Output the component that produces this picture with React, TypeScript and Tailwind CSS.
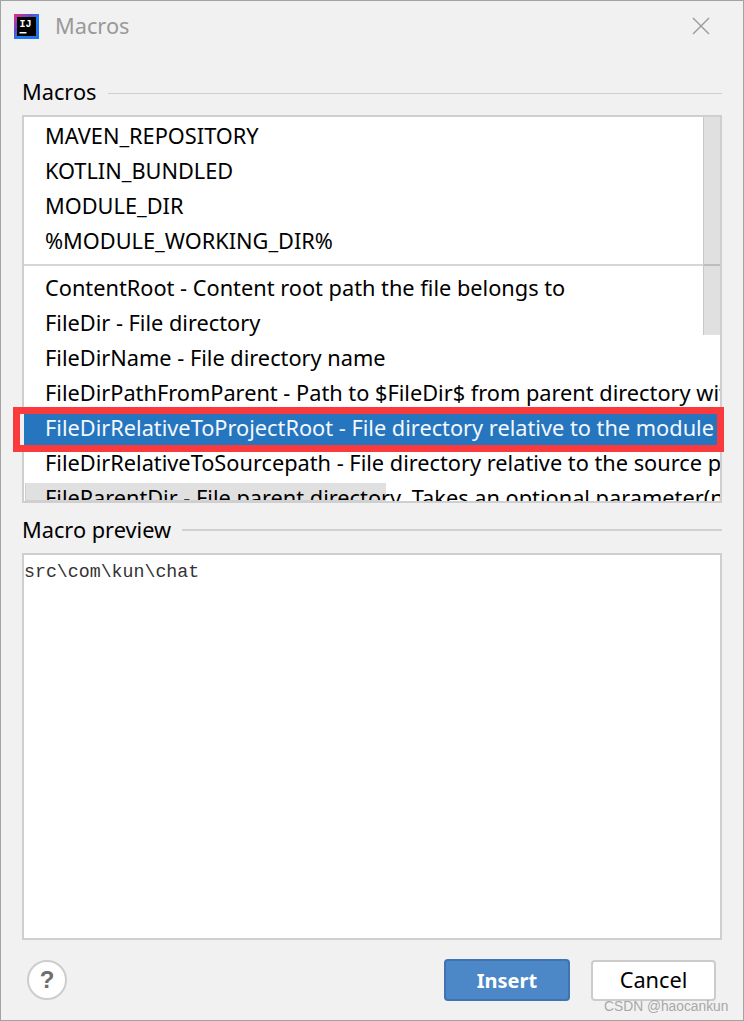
const rowsA = ["MAVEN_REPOSITORY", "KOTLIN_BUNDLED", "MODULE_DIR", "%MODULE_WORKING_DIR%"];
const rowsB = [
  "ContentRoot - Content root path the file belongs to",
  "FileDir - File directory",
  "FileDirName - File directory name",
  "FileDirPathFromParent - Path to $FileDir$ from parent directory with an optional parameter",
  "FileDirRelativeToProjectRoot - File directory relative to the module content root",
  "FileDirRelativeToSourcepath - File directory relative to the source path root",
  "FileParentDir - File parent directory. Takes an optional parameter(number of levels up)",
];

function Row({ text, selected }: { text: string; selected?: boolean }) {
  return (
    <div className={selected ? "h-[35px] pl-[21px] pb-[1px] flex items-center whitespace-nowrap bg-[#2675bf] text-[#f4f8fc]" : "h-[35px] pl-[21px] pb-[1px] flex items-center whitespace-nowrap text-black"}>
      {text}
    </div>
  );
}

function Label({ text, thick }: { text: string; thick?: boolean }) {
  return (
    <div className="h-[24px] flex items-center gap-[11px] text-black">
      <span className={thick ? "leading-none pb-[1px]" : "leading-none pb-[3px]"}>{text}</span>
      <div className={thick ? "flex-1 h-[2px] bg-[#d0d0d0]" : "flex-1 h-[1px] bg-[#cfcfcf]"} />
    </div>
  );
}

export default function App() {
  return (
    <div className="relative w-[744px] h-[1021px] flex flex-col border border-[#a3a3a3] bg-[#f1f1f1] overflow-hidden font-['Noto_Sans',sans-serif] text-[21.75px]">
      <div className="h-[50px] shrink-0 flex items-center pl-[13px] pr-[33px]">
        <svg width="25" height="25" viewBox="0 0 25 25" className="shrink-0">
          <defs>
            <linearGradient id="ij" x1="0" y1="0" x2="1" y2="1">
              <stop offset="0" stopColor="#ea2f7e" />
              <stop offset="0.35" stopColor="#6a45c9" />
              <stop offset="0.55" stopColor="#1f7cf0" />
              <stop offset="1" stopColor="#1f6ff0" />
            </linearGradient>
          </defs>
          <rect width="25" height="25" fill="url(#ij)" />
          <rect x="3" y="3" width="19" height="19" fill="#000" />
          <text x="5.5" y="13" fill="#fff" fontSize="10" fontWeight="700" fontFamily="Liberation Mono, monospace">IJ</text>
          <rect x="5.5" y="18" width="7" height="1.5" fill="#fff" />
        </svg>
        <span className="ml-[16px] text-[#999999]">Macros</span>
        <svg width="18" height="18" viewBox="0 0 18 18" className="ml-auto" fill="none" stroke="#9a9a9a" strokeWidth="1.4">
          <path d="M1 1 L17 17 M17 1 L1 17" />
        </svg>
      </div>

      <div className="flex-1 min-h-0 flex flex-col px-[21px]">
        <div className="mt-[30px]"><Label text="Macros" /></div>
        <div className="relative mt-[10px] h-[388px] shrink-0 border-2 border-[#cfcfcf] bg-white">
          <div className="h-full overflow-hidden pt-[2px]">
            {rowsA.map((t) => <Row key={t} text={t} />)}
            <div className="mt-[5px] mb-[5px] h-[2px] bg-[#d6d6d6]" />
            {rowsB.map((t, i) => <Row key={t} text={t} selected={i === 4} />)}
          </div>
          <div className="absolute right-0 top-0 w-[17px] h-[218px] bg-black/12 border-l border-[#c8c8c8]" />
          <div className="absolute left-[1px] bottom-0 w-[361px] h-[18px] bg-black/12 border-l border-b border-[#d0d0d0]" />
          <div className="absolute left-[-11px] right-[-4px] top-[290px] h-[45px] border-[7px] border-[#fb3a3d]">
            <div className="w-[4px] h-full bg-[#f1f1f1]" />
          </div>
        </div>

        <div className="mt-[15px]"><Label text="Macro preview" thick /></div>
        <div className="mt-[11px] flex-1 min-h-0 border-2 border-[#cfcfcf] bg-white pt-[5px] font-['Liberation_Mono',monospace] text-[18.25px] leading-[24px] text-[#333333]">
          src\com\kun\chat
        </div>
      </div>

      <div className="h-[80px] shrink-0 flex items-center pl-[26px] pr-[27px]">
        <div className="w-[40px] h-[40px] rounded-full border-2 border-[#cdcdcd] bg-white flex items-center justify-center text-[24px] font-bold text-[#6e6e6e] font-['Liberation_Sans',sans-serif]">?</div>
        <div className="ml-auto flex items-center gap-[21px]">
          <div className="w-[126px] h-[42px] rounded-[4px] border-2 border-[#3f74b0] bg-[#4c87c8] flex items-center justify-center pt-[1px] text-[20px] text-white font-bold">Insert</div>
          <div className="w-[125px] h-[41px] rounded-[4px] border-2 border-[#cccccc] bg-white flex items-center justify-center text-black">Cancel</div>
        </div>
      </div>

      <div className="absolute left-[603px] top-[997px] text-[13.8px] leading-[18px] text-[#a8a8a8] font-['Liberation_Sans',sans-serif]">CSDN @haocankun</div>
    </div>
  );
}
